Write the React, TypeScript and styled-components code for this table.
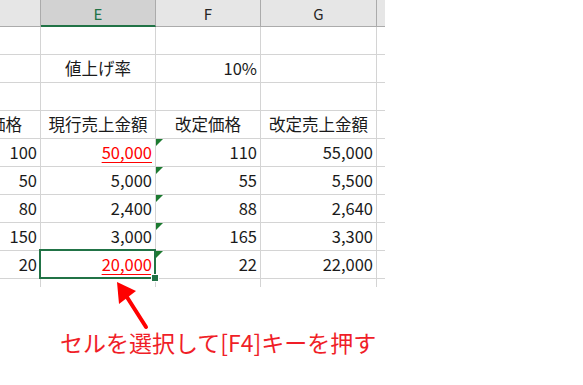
import React from "react";
import styled, { createGlobalStyle, css } from "styled-components";

const Global = createGlobalStyle`
  html, body { margin: 0; padding: 0; background: #ffffff; }
  body { font-family: "Noto Sans CJK JP", "Noto Sans", sans-serif; }
`;

const GREEN = "#217346";
const GRID = "#d4d4d4";

const Page = styled.div`
  position: relative;
  width: 583px;
  height: 385px;
  background: #fff;
  overflow: hidden;
`;

const Viewport = styled.div`
  width: 385px;
  height: 287px;
  overflow: hidden;
`;

const Sheet = styled.div`
  margin-left: -40px;
  display: grid;
  grid-template-columns: 81px 115px 105px 116px 60px;
  grid-template-rows: 27px repeat(9, 28px) 28px;
  font-family: "Noto Sans CJK JP", sans-serif;
  font-size: 16.5px;
  color: #1a1a1a;
`;

const ColHead = styled.div<{ $sel?: boolean }>`
  box-sizing: border-box;
  display: flex;
  align-items: center;
  justify-content: center;
  background: ${(p) => (p.$sel ? "#d2d2d2" : "#e6e6e6")};
  border-right: 1px solid #ababab;
  border-bottom: ${(p) => (p.$sel ? `2px solid ${GREEN}` : "1px solid #ababab")};
  color: ${(p) => (p.$sel ? GREEN : "#262626")};
  font-size: 15px;
  padding-top: 1px;
`;

const Cell = styled.div<{ $align?: "left" | "center" | "right"; $red?: boolean }>`
  position: relative;
  box-sizing: border-box;
  border-right: 1px solid ${GRID};
  border-bottom: 1px solid ${GRID};
  display: flex;
  align-items: center;
  padding: 0 3px 1px 3px;
  white-space: nowrap;
  justify-content: ${(p) =>
    p.$align === "right" ? "flex-end" : p.$align === "center" ? "center" : "flex-start"};
  ${(p) =>
    p.$red &&
    css`
      color: #ff0000;
      text-decoration: underline;
      text-decoration-thickness: 1px;
      text-underline-offset: 3px;
    `}
`;

const ErrorMark = styled.span`
  position: absolute;
  left: 0;
  top: 0;
  width: 0;
  height: 0;
  border-top: 7px solid #1c7a30;
  border-right: 7px solid transparent;
`;

const Selection = styled.span`
  position: absolute;
  left: -2px;
  top: -2px;
  right: -1px;
  bottom: -1px;
  border: 2px solid ${GREEN};
  z-index: 2;
  pointer-events: none;
`;

const FillHandle = styled.span`
  position: absolute;
  right: -5px;
  bottom: -5px;
  width: 6px;
  height: 6px;
  background: ${GREEN};
  border: 1px solid #fff;
`;

const Caption = styled.div`
  margin-top: 44px;
  padding-left: 60px;
  font-family: "Noto Sans CJK JP", sans-serif;
  font-size: 23px;
  line-height: 23px;
  color: #f01e28;
  white-space: nowrap;
`;

const ArrowSvg = styled.svg`
  position: absolute;
  left: 100px;
  top: 270px;
  width: 60px;
  height: 70px;
  overflow: visible;
`;

type Row = {
  d?: string;
  e?: string;
  f?: string;
  g?: string;
  eRed?: boolean;
  mark?: boolean;
  sel?: boolean;
  head?: boolean;
};

const rows: Row[] = [
  {},
  { e: "値上げ率", f: "10%" },
  {},
  { d: "価格", e: "現行売上金額", f: "改定価格", g: "改定売上金額", head: true },
  { d: "100", e: "50,000", f: "110", g: "55,000", eRed: true, mark: true },
  { d: "50", e: "5,000", f: "55", g: "5,500", mark: true },
  { d: "80", e: "2,400", f: "88", g: "2,640", mark: true },
  { d: "150", e: "3,000", f: "165", g: "3,300", mark: true },
  { d: "20", e: "20,000", f: "22", g: "22,000", eRed: true, mark: true, sel: true },
  {},
];

export default function App() {
  return (
    <Page>
      <Global />
      <Viewport>
        <Sheet>
          <ColHead />
          <ColHead $sel>E</ColHead>
          <ColHead>F</ColHead>
          <ColHead>G</ColHead>
          <ColHead />
          {rows.map((r, i) => {
            const isLabelRow = i === 1;
            return (
              <React.Fragment key={i}>
                <Cell $align="right" style={r.head ? { paddingRight: 18 } : undefined}>
                  {r.d}
                </Cell>
                <Cell $align={r.head || isLabelRow ? "center" : "right"} $red={r.eRed}>
                  {r.e}
                  {r.sel && (
                    <Selection>
                      <FillHandle />
                    </Selection>
                  )}
                </Cell>
                <Cell $align={r.head ? "center" : "right"}>
                  {r.mark && <ErrorMark />}
                  {r.f}
                </Cell>
                <Cell $align={r.head ? "center" : "right"}>{r.g}</Cell>
                <Cell />
              </React.Fragment>
            );
          })}
        </Sheet>
      </Viewport>
      <Caption>セルを選択して[F4]キーを押す</Caption>
      <ArrowSvg viewBox="100 270 60 70">
        <line x1="146" y1="327" x2="125" y2="294" stroke="#ff0000" strokeWidth="4" strokeLinecap="round" />
        <polygon points="117,282 136,291 119,304" fill="#ff0000" />
      </ArrowSvg>
    </Page>
  );
}
